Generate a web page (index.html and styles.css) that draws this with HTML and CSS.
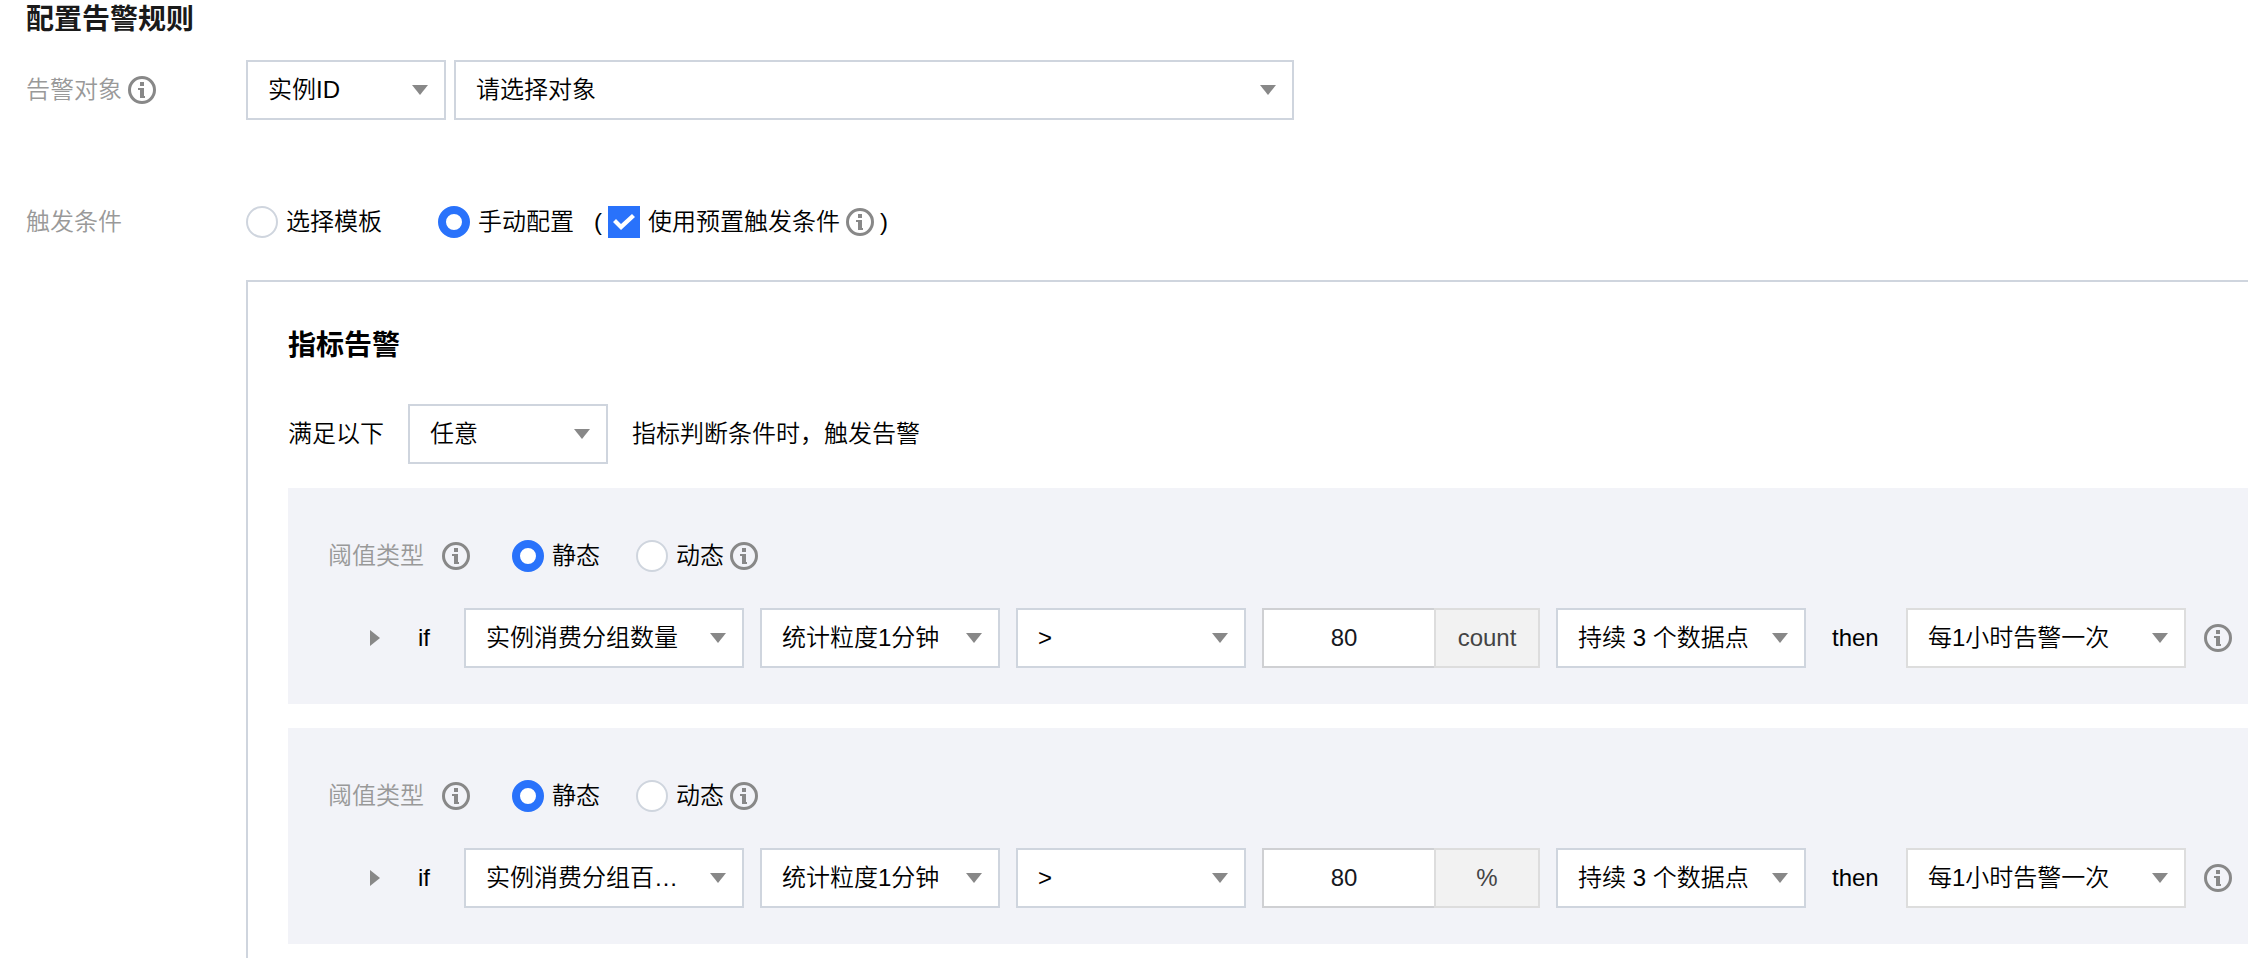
FILE: index.html
```html
<!DOCTYPE html>
<html lang="zh-CN">
<head>
    <meta charset="UTF-8">
    <meta name="viewport" content="width=device-width, initial-scale=1.0">
    <title>配置告警规则</title>
    <link rel="stylesheet" href="styles.css">
</head>
<body>
    <svg class="sprite" aria-hidden="true">
        <symbol id="info" viewBox="0 0 28 28">
            <circle cx="14" cy="14" r="12.5" fill="none" stroke="currentColor" stroke-width="3"/>
            <path fill="currentColor" d="M12 6h4v4h-4zM10 12h6v8h1v2h-5v-8h-2z"/>
        </symbol>
    </svg>
    <h1 class="title">配置告警规则</h1>
    <form class="form">
        <div class="form-row target-row">
            <div class="form-label">
                <span>告警对象</span>
                <svg class="info"><use href="#info"/></svg>
            </div>
            <div class="target">
                <div class="select small">
                    <select aria-label="对象类型"><option>实例ID</option></select>
                </div>
                <div class="select large">
                    <select aria-label="告警对象"><option>请选择对象</option></select>
                </div>
            </div>
        </div>
        <div class="form-row trigger-row">
            <div class="form-label"><span>触发条件</span></div>
            <div class="trigger">
                <div class="modes">
                    <label class="choice"><input type="radio" name="mode">选择模板</label>
                    <label class="choice"><input type="radio" name="mode" checked>手动配置</label>
                    <div class="preset">
                        <span>(</span>
                        <label class="choice"><input type="checkbox" checked>使用预置触发条件</label>
                        <svg class="info"><use href="#info"/></svg>
                        <span>)</span>
                    </div>
                </div>
                <div class="panel">
                    <h2 class="panel-title">指标告警</h2>
                    <div class="match">
                        <label for="match">满足以下</label>
                        <div class="select small">
                            <select id="match"><option>任意</option></select>
                        </div>
                        <span>指标判断条件时，触发告警</span>
                    </div>
                    <div class="rule">
                        <div class="rule-type">
                            <span class="type-label">阈值类型</span>
                            <svg class="info"><use href="#info"/></svg>
                            <div class="type-options">
                                <label class="choice"><input type="radio" name="type1" checked>静态</label>
                                <label class="choice"><input type="radio" name="type1">动态</label>
                            </div>
                            <svg class="info"><use href="#info"/></svg>
                        </div>
                        <div class="rule-line">
                            <button class="expand" type="button" aria-label="展开"></button>
                            <span class="if">if</span>
                            <div class="select metric">
                                <select aria-label="指标"><option>实例消费分组数量</option></select>
                            </div>
                            <div class="select period">
                                <select aria-label="统计粒度"><option>统计粒度1分钟</option></select>
                            </div>
                            <div class="select compare">
                                <select aria-label="比较"><option>&gt;</option></select>
                            </div>
                            <div class="threshold">
                                <input id="value1" type="text" value="80" aria-label="阈值">
                                <label class="unit" for="value1">count</label>
                            </div>
                            <div class="select duration">
                                <select aria-label="持续"><option>持续 3 个数据点</option></select>
                            </div>
                            <span class="then">then</span>
                            <div class="select repeat">
                                <select aria-label="告警频率"><option>每1小时告警一次</option></select>
                            </div>
                            <svg class="info"><use href="#info"/></svg>
                        </div>
                    </div>
                    <div class="rule">
                        <div class="rule-type">
                            <span class="type-label">阈值类型</span>
                            <svg class="info"><use href="#info"/></svg>
                            <div class="type-options">
                                <label class="choice"><input type="radio" name="type2" checked>静态</label>
                                <label class="choice"><input type="radio" name="type2">动态</label>
                            </div>
                            <svg class="info"><use href="#info"/></svg>
                        </div>
                        <div class="rule-line">
                            <button class="expand" type="button" aria-label="展开"></button>
                            <span class="if">if</span>
                            <div class="select metric">
                                <select aria-label="指标"><option>实例消费分组百…</option></select>
                            </div>
                            <div class="select period">
                                <select aria-label="统计粒度"><option>统计粒度1分钟</option></select>
                            </div>
                            <div class="select compare">
                                <select aria-label="比较"><option>&gt;</option></select>
                            </div>
                            <div class="threshold">
                                <input id="value2" type="text" value="80" aria-label="阈值">
                                <label class="unit" for="value2">%</label>
                            </div>
                            <div class="select duration">
                                <select aria-label="持续"><option>持续 3 个数据点</option></select>
                            </div>
                            <span class="then">then</span>
                            <div class="select repeat">
                                <select aria-label="告警频率"><option>每1小时告警一次</option></select>
                            </div>
                            <svg class="info"><use href="#info"/></svg>
                        </div>
                    </div>
                </div>
            </div>
        </div>
    </form>
</body>
</html>
```
FILE: styles.css
```css
* {
    box-sizing: border-box;
}
body {
    display: flex;
    flex-direction: column;
    min-height: 100vh;
    margin: 0;
    padding-left: 26px;
    background-color: #fff;
    color: #000;
    font-family: "Liberation Sans", "Noto Sans CJK SC", sans-serif;
    font-size: 24px;
    font-weight: 350;
    line-height: 32px;
}
.sprite {
    display: none;
}
.title {
    margin: 0 0 20px;
    font-size: 28px;
    line-height: 40px;
    color: #1a1a1a;
}
.form {
    flex: 1;
    display: flex;
    flex-direction: column;
}
.form-row {
    display: flex;
}
.target-row {
    align-items: center;
    margin-bottom: 86px;
}
.trigger-row {
    flex: 1;
}
.form-label {
    display: flex;
    align-items: center;
    align-self: flex-start;
    gap: 6px;
    flex: none;
    width: 220px;
    color: #999;
}
.target-row .form-label {
    align-self: center;
}
.info {
    flex: none;
    width: 28px;
    height: 28px;
    color: #888;
}
.target {
    display: flex;
    gap: 8px;
}

/* drop-downs: the arrow shares the grid cell of the select */
.select {
    display: grid;
    flex: none;
    align-items: center;
    height: 60px;
}
.select select {
    grid-area: 1 / 1;
    appearance: none;
    width: 100%;
    height: 60px;
    padding: 0 40px 0 20px;
    border: 2px solid #cfd5de;
    border-radius: 0;
    background-color: #fff;
    color: #000;
    font: inherit;
}
.select::after {
    content: "";
    grid-area: 1 / 1;
    justify-self: end;
    width: 16px;
    height: 10px;
    margin-right: 18px;
    background-color: #888;
    clip-path: polygon(0 0, 100% 0, 50% 100%);
    pointer-events: none;
}
.small {
    width: 200px;
}
.large {
    width: 840px;
}

.trigger {
    flex: 1;
    min-width: 0;
    display: flex;
    flex-direction: column;
}
.modes {
    display: flex;
    align-items: center;
    height: 32px;
    margin-bottom: 42px;
}
.modes > .choice + .choice {
    margin-left: 56px;
}
.choice {
    display: flex;
    align-items: center;
    gap: 8px;
}
.choice input {
    appearance: none;
    width: 32px;
    height: 32px;
    margin: 0;
    border: 2px solid #cfd5de;
    background-color: #fff;
}
.choice input[type="radio"] {
    border-radius: 50%;
}
.choice input[type="radio"]:checked {
    border: 8px solid #2972fb;
}
.choice input[type="checkbox"]:checked {
    display: grid;
    place-items: center;
    border: none;
    background-color: #2972fb;
}
.choice input[type="checkbox"]:checked::before {
    content: "";
    width: 22px;
    height: 16px;
    background-color: #fff;
    clip-path: polygon(0 8px, 3px 5px, 8px 10px, 19px 0, 22px 3px, 8px 16px);
}
.preset {
    display: flex;
    align-items: center;
    gap: 6px;
    margin-left: 20px;
}

.panel {
    flex: 1;
    padding: 44px 0 14px 40px;
    border: solid #cfd5de;
    border-width: 2px 0 0 2px;
}
.panel-title {
    margin: 0 0 38px;
    font-size: 28px;
    line-height: 40px;
}
.match {
    display: flex;
    align-items: center;
    gap: 24px;
    margin-bottom: 24px;
}
.rule {
    padding: 52px 16px 36px 40px;
    background-color: #f2f3f8;
}
.rule + .rule {
    margin-top: 24px;
}
.rule-type {
    display: flex;
    align-items: center;
    height: 32px;
    margin-bottom: 36px;
}
.type-label {
    margin-right: 18px;
    color: #999;
}
.type-options {
    display: flex;
    gap: 36px;
    margin: 0 6px 0 42px;
}
.rule-line {
    display: flex;
    align-items: center;
    gap: 16px;
    padding-left: 40px;
}
.expand {
    width: 14px;
    height: 16px;
    padding: 0;
    border: none;
    background-color: #888;
    clip-path: polygon(2px 0, 12px 50%, 2px 100%);
}
.if {
    width: 30px;
    margin-left: 20px;
}
.metric,
.repeat {
    width: 280px;
}
.period {
    width: 240px;
}
.compare {
    width: 230px;
}
.duration {
    width: 250px;
}
.repeat {
    margin-right: 2px;
}
.repeat select {
    border-color: #ddd;
}
.threshold {
    display: flex;
    flex: none;
    width: 278px;
    height: 60px;
}
.threshold input {
    flex: 1;
    min-width: 0;
    padding: 0 20px 0 10px;
    border: 2px solid #cfd0d3;
    border-right: none;
    border-radius: 0;
    background-color: #fff;
    color: #16181f;
    font: inherit;
    text-align: center;
}
.unit {
    display: flex;
    align-items: center;
    justify-content: center;
    width: 106px;
    border: 2px solid #ddd;
    background-color: #f2f2f2;
    color: #444;
}
.then {
    width: 68px;
    padding-left: 10px;
}
```
